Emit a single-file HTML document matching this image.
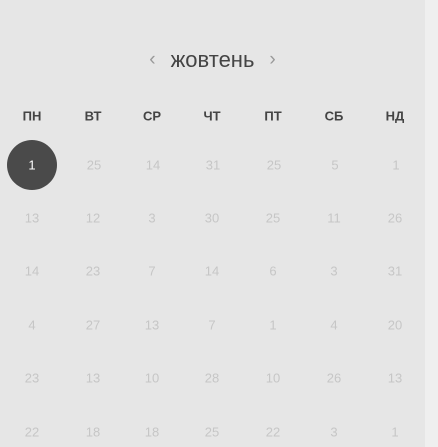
<!DOCTYPE html>
<html><head><meta charset="utf-8"><style>
html,body{margin:0;padding:0;width:438px;height:447px;overflow:hidden;background:#efefef;font-family:"Liberation Sans",sans-serif}
.p{position:absolute;left:0;top:0;width:425px;height:447px;background:#e6e6e6}
.t{position:absolute;left:0;width:425px;top:47px;text-align:center;font-size:22px;color:#444}
.a{color:#999;font-size:19px;margin:0 15px;vertical-align:2px}
.c{position:absolute;transform:translate(-50%,-50%);white-space:nowrap}
.h{font-size:13px;font-weight:bold;color:#444}
.n{font-size:13px;color:#c6c6c6}
.s{position:absolute;left:7px;top:140px;width:50px;height:50px;border-radius:50%;background:#4a4a4a}
</style></head><body><div class="p"></div>
<div class="t"><span class="a">&lsaquo;</span>жовтень<span class="a">&rsaquo;</span></div>
<div class="s"></div>
<div id="g"></div>
<script>
var xs=[32,93,152,212,273,334,395],ys=[165,218,271,325,378,432];
var hd=["ПН","ВТ","СР","ЧТ","ПТ","СБ","НД"];
var d=[[1,25,14,31,25,5,1],[13,12,3,30,25,11,26],[14,23,7,14,6,3,31],[4,27,13,7,1,4,20],[23,13,10,28,10,26,13],[22,18,18,25,22,3,1]];
var h="";
for(var i=0;i<7;i++)h+='<div class="c h" style="left:'+xs[i]+'px;top:116px">'+hd[i]+'</div>';
for(var r=0;r<6;r++)for(var i=0;i<7;i++){var st=(r==0&&i==0)?'color:#fff':'';h+='<div class="c n" style="left:'+(xs[i]+(r==0&&i>0?1:0))+'px;top:'+ys[r]+'px;'+st+'">'+d[r][i]+'</div>';}
document.getElementById("g").innerHTML=h;
</script>
</body></html>
